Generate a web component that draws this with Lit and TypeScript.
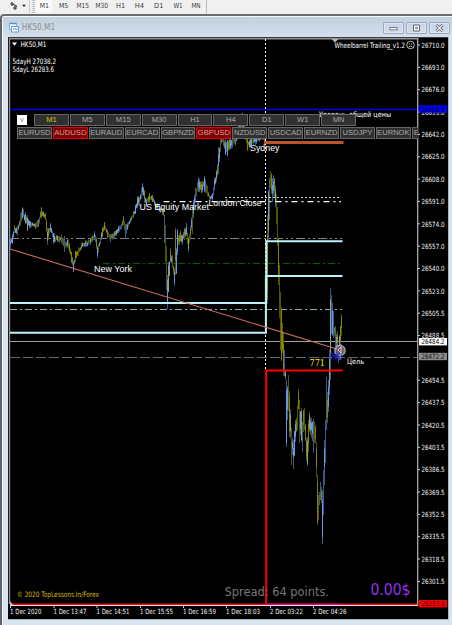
import { LitElement, html, svg, css } from "lit";
import { customElement } from "lit/decorators.js";
import { classMap } from "lit/directives/class-map.js";

const PERIODS = ["M1", "M5", "M15", "M30", "H1", "H4", "D1", "W1", "MN"];
const SYMBOLS = ["EURUSD", "AUDUSD", "EURAUD", "EURCAD", "GBPNZD", "GBPUSD", "NZDUSD", "USDCAD", "EURNZD", "USDJPY", "EURNOK"];
const HOT = new Set(["AUDUSD", "GBPUSD"]);
const PRICES = ["26710.0", "26693.0", "26676.0", "26659.0", "26642.0", "26625.0", "26608.0", "26591.0", "26574.0", "26557.0", "26540.0", "26523.0", "26505.5", "26488.5", "26471.5", "26454.5", "26437.5", "26420.5", "26403.5", "26386.5", "26369.5", "26352.5", "26335.5", "26318.5", "26301.5"];
const TIMES: [number, string, number][] = [
  [10, "1 Dec 2020", 31.5], [53.5, "1 Dec 13:47", 33], [96.5, "1 Dec 14:51", 33], [140, "1 Dec 15:55", 33],
  [183, "1 Dec 16:59", 33], [226, "1 Dec 18:03", 34], [270, "2 Dec 03:22", 33], [313, "2 Dec 04:26", 33.5],
];

// x, high, low of the price range
const RANGE: [number, number, number][] = [
  [10, 238, 249], [12, 234, 244], [14, 225, 233], [17, 226, 236], [20, 213, 226], [22, 207, 219], [25, 212, 224], [27, 215, 231], [30, 221, 228], [35, 223, 229], [38, 219, 227], [41, 207, 218], [45, 213, 220], [46, 219, 232], [47, 228, 245], [50, 223, 232], [53, 233, 244], [57, 235, 242], [61, 234, 243], [64, 236, 252], [68, 239, 249], [71, 252, 263], [73, 261, 272], [75, 251, 262], [78, 247, 256], [81, 243, 249], [85, 240, 247], [90, 238, 245], [94, 231, 240], [96, 237, 249], [97, 246, 258], [100, 237, 244], [102, 227, 237], [104, 222, 230], [107, 230, 238], [110, 234, 242], [114, 231, 239], [118, 226, 233], [121, 224, 229], [123, 216, 225], [125, 224, 239], [127, 223, 230], [130, 218, 223], [133, 211, 218], [135, 205, 214], [137, 196, 208], [139, 197, 206], [142, 183, 195], [144, 190, 203], [146, 198, 207], [149, 193, 203], [152, 195, 202], [155, 202, 209], [159, 204, 212], [163, 208, 216], [164, 215, 243], [165, 225, 262], [166, 246, 290], [167, 275, 309], [168, 262, 292], [170, 248, 262], [172, 255, 268], [174, 268, 286], [175, 228, 275], [176, 248, 274], [177, 229, 255], [180, 231, 242], [182, 234, 245], [184, 228, 240], [186, 223, 236], [188, 237, 252], [190, 226, 238], [192, 207, 234], [193, 200, 218], [195, 188, 202], [198, 177, 192], [201, 181, 193], [204, 176, 192], [207, 186, 196], [209, 195, 201], [212, 193, 202], [214, 178, 190], [216, 170, 182], [218, 147, 174], [220, 139, 152], [222, 132, 142], [225, 139, 155], [227, 140, 156], [229, 138, 150], [232, 137, 148], [235, 136, 146], [238, 125, 138], [242, 113, 128], [245, 130, 140], [247, 137, 151], [250, 137, 148], [255, 134, 146], [259, 136, 142], [263, 134, 140], [265, 134, 150],
];
const SESSION: [number, number, number][] = [
  [267, 215, 300], [268, 190, 240], [269, 178, 220], [270, 171, 188], [271, 173, 194], [272, 178, 202], [273, 175, 196], [274, 178, 197], [275, 186, 207], [276, 194, 224], [277, 207, 246], [278, 238, 285], [279, 265, 318], [280, 292, 350], [281, 307, 361], [282, 323, 353], [283, 333, 376], [284, 350, 376], [285, 370, 380], [286, 380, 447], [287, 386, 420], [288, 375, 411], [289, 391, 437], [290, 409, 438], [291, 428, 465], [292, 438, 455], [293, 440, 469], [294, 431, 456], [295, 420, 442], [297, 406, 430], [298, 389, 409], [299, 400, 443], [301, 408, 442], [302, 422, 452], [303, 410, 432], [304, 408, 430], [305, 424, 441], [306, 438, 461], [307, 437, 466], [308, 420, 452], [309, 412, 432], [311, 418, 438], [313, 419, 453], [314, 421, 443], [315, 425, 443], [316, 442, 477], [317, 475, 525], [318, 495, 520], [319, 492, 505], [320, 482, 500], [321, 487, 503], [322, 490, 544], [323, 470, 515], [324, 440, 485], [325, 420, 463], [326, 377, 430], [327, 392, 423], [328, 380, 412], [329, 350, 395], [330, 288, 380], [331, 295, 334], [332, 303, 336], [333, 311, 338], [335, 326, 349], [337, 331, 357], [338, 345, 363], [339, 335, 358], [340, 326, 346], [341, 314, 336], [342, 328, 353],
];

function noise(n: number) {
  const v = Math.sin(n * 127.1) * 43758.5453;
  return v - Math.floor(v);
}

function bars(points: [number, number, number][]) {
  const out = [];
  for (let i = 0; i < points.length - 1; i++) {
    const [x0, h0, l0] = points[i];
    const [x1, h1, l1] = points[i + 1];
    const span = x1 - x0;
    for (let k = 0; k < span; k++) {
      const t = k / span;
      const x = x0 + k;
      const h = h0 + (h1 - h0) * t;
      const l = l0 + (l1 - l0) * t;
      const len = l - h;
      const inner = span > 1 && k > 0;
      const hi = h + (inner ? len * 0.35 * noise(x) : 0);
      const lo = l - (inner ? len * 0.35 * noise(x + 400) : 0);
      const slope = (h1 + l1 - h0 - l0) / span;
      const blue = slope > 8 ? noise(x + 50) > 0.82 : slope < -8 ? noise(x + 50) > 0.22 : noise(x + 50) > 0.5;
      const a = hi + (lo - hi) * 0.3 * noise(x + 90);
      const b = lo - (lo - hi) * 0.4 * noise(x + 70);
      const tone = noise(x + 33);
      out.push(svg`<path class=${blue ? "up" : "down"} d="M${x + 0.5} ${hi}V${lo}"/>`);
      if (tone > 0.35) out.push(svg`<path class=${tone > 0.85 ? "mix" : blue ? "upcore" : "downcore"} d="M${x + 0.5} ${a}V${b}"/>`);
    }
  }
  return out;
}

@customElement("app-root")
export class AppRoot extends LitElement {
  static styles = css`
    :host { display: flex; flex-direction: column; width: 452px; height: 625px; overflow: hidden; background: #f0f0f0; font-family: "DejaVu Sans Condensed", "DejaVu Sans", sans-serif; }
    .toolbar { display: flex; height: 14px; flex: none; align-items: flex-start; background: #f0f0f0; }
    .tools { width: 35px; height: 14px; flex: none; }
    .periods { display: block; height: 14px; width: 172px; flex: none; }
    .window { flex: 1; display: flex; flex-direction: column; min-height: 0; border-top: 2px solid #686b6f; border-left: 2px solid #62666b; border-top-left-radius: 4px; background: #d7e4f2; box-shadow: inset 1px 1px #f4f9fe; }
    .title { height: 20px; flex: none; display: flex; align-items: center; padding: 0 2px 0 6px; background: linear-gradient(#c2d0df, #d3dfec); margin: 1px 0 0 1px; }
    .caption { flex: 1; height: 20px; display: block; }
    .controls { display: flex; gap: 2px; padding-top: 2px; }
    .ctl { width: 21px; height: 12px; box-sizing: border-box; border: 1px solid #9aa9bd; border-radius: 1px; box-shadow: inset 0 0 0 1px #dce7f2; }
    .ctl svg { display: block; width: 19px; height: 10px; }
    .pane { position: relative; width: 442px; height: 584px; margin: 0 0 0 6px; overflow: hidden; background: #000; flex: none; }
    .chart { display: block; width: 442px; height: 584px; }
    .panel { position: absolute; left: 9px; top: 77px; width: 401px; overflow: hidden; display: flex; flex-direction: column; }
    .row { display: flex; gap: 1px; height: 13px; }
    .btn { flex: none; box-sizing: border-box; width: 34.9px; height: 12px; border: 1px solid #666; background: #303030; color: #a8a8a8; font: 7.6px/10px "Liberation Sans", Arial, sans-serif; text-align: center; white-space: nowrap; overflow: hidden; }
    .btn.sel { color: #d9c900; }
    .btn.hot { background: #810000; border-color: #e00000; color: #d39b9b; }
    .btn.edge { width: 8px; border-right: 0; padding-left: 1px; text-align: left; }
    .fold { flex: none; width: 10px; height: 10px; margin: 1px 6px 0 0; background: #fff; color: #888; font: 7px/9px "Liberation Sans", Arial, sans-serif; text-align: center; }
    .up, .down, .upcore, .downcore, .mix { fill: none; stroke-width: 1; }
    .up { stroke: #38588f; }
    .upcore { stroke: #659bea; }
    .down { stroke: #525200; }
    .downcore { stroke: #858500; }
    .mix { stroke: #8da389; }
    .ui { font-size: 7.4px; fill: #fff; font-family: "DejaVu Sans Condensed", "DejaVu Sans", sans-serif; }
    .axis { font-size: 7.1px; fill: #f2f2f2; }
    .tf { font-size: 7px; fill: #3a3a3a; }
    .arial { font: 9px "Liberation Sans", Arial, sans-serif; fill: #fff; }
    .profit { font: 16px "DejaVu Sans Condensed", sans-serif; fill: #9431ea; }
    .spread { font: 13px "DejaVu Sans Condensed", sans-serif; fill: #777; }
    .count { font: 10px "DejaVu Serif", "Liberation Serif", serif; fill: #f2f200; }
  `;

  private chart() {
    const label = (x: number, y: number, w: number, s: string, cls = "ui") =>
      svg`<text class=${cls} x=${x} y=${y} textLength=${w} lengthAdjust="spacingAndGlyphs">${s}</text>`;
    return html`
      <svg class="chart" viewBox="8 37 442 584">
        <rect x="8" y="37" width="442" height="584" fill="#d7e4f2"/>
        <rect x="8" y="37" width="441" height="583" fill="#e8edf2"/>
        <rect x="7" y="36.5" width="441.5" height="583" fill="#777"/>
        <rect x="8" y="37.5" width="440" height="581.5" fill="#000"/>
        <path d="M9.5 604V38.7H418" stroke="#919191" fill="none" stroke-width="1.4"/>
        <path d="M10 238.5H342" stroke="#858585" stroke-dasharray="9 3 2 3 2 3"/>
        <path d="M103 263.5H342" stroke="#006000" stroke-dasharray="7 3 2 3"/>
        <path d="M10 309.5H342" stroke="#8caeb8" stroke-dasharray="7 3 2 3"/>
        <path d="M10 341.5H418" stroke="#a0a0a0"/>
        <path d="M10 357.5H418" stroke="#666" stroke-dasharray="10 3"/>
        <path d="M265.5 39V371" stroke="#fff" stroke-dasharray="2 2"/>
        ${bars(RANGE)}${bars(SESSION)}
        <path d="M10 109.5H418" stroke="#0000f5" stroke-width="1.3"/>
        <path d="M264 142.5H343.5" stroke="#b95330" stroke-width="3"/>
        <path d="M225 197.5H341" stroke="#b8e0e4" stroke-dasharray="2 2"/>
        <path d="M163.5 201.7H341" stroke="#fff" stroke-width="1.2" stroke-dasharray="6 4 2 4"/>
        <path d="M10 302.9H266.3V241.3H342.5M10 332.8H265.9V275.9H342.5" fill="none" stroke="#bff2f8" stroke-width="2"/>
        <path d="M10 249L340 350" stroke="#cc6d61" stroke-width="1.1"/>
        <path d="M266.2 604V370.6H342.7" stroke="#f00" stroke-width="2" fill="none"/>
        <circle cx="340" cy="350.5" r="5.2" fill="#666" stroke="#aaa" stroke-width="1.2"/>
        <path d="M331 353L342 359M341 352L331 359M336 350V361M331 356H343" stroke="#1818d0" stroke-width="1"/>
        <path d="M337 345L335 354M341 344L340 360" stroke="#72a5e8" stroke-width="1"/>
        <path d="M338 350l3-3v6z" fill="#f02020" stroke="#eee" stroke-width=".7"/>

        <path d="M12 42.5h5l-2.5 3.2z" fill="#fff"/>
        ${label(20.5, 47.3, 26, "HK50,M1")}
        ${label(12.5, 64, 43.5, "5dayH 27038.2")}
        ${label(12.5, 72.3, 41.5, "5dayL 26283.6")}
        <path d="M331.5 39h7l-3.5 3.5z" fill="#b5b5b5"/>
        ${label(334.5, 47.6, 70.5, "Wheelbarrel Trailing_v1.2")}
        <circle cx="410.5" cy="45" r="3.8" fill="none" stroke="#ddd" stroke-width=".8"/>
        <circle cx="409.3" cy="44" r=".6" fill="#eee"/><circle cx="411.7" cy="44" r=".6" fill="#eee"/>
        <path d="M408.5 47q2-2 4 0" stroke="#eee" stroke-width=".7" fill="none"/>
        ${label(319, 116.5, 72, "Уровень общей цены")}
        ${label(250, 151.3, 29.5, "Sydney", "arial")}
        ${label(139.5, 209.8, 69.5, "US Equity Market", "arial")}
        ${label(208.5, 206.3, 53, "London Close", "arial")}
        ${label(94, 272, 38, "New York", "arial")}
        ${label(309.5, 366.3, 15.5, "771", "count")}
        ${label(347, 364, 17, "Цель")}
        <text class="ui" x="17" y="597" textLength="82" lengthAdjust="spacingAndGlyphs" style="fill:#d9bd00">© 2020 TopLessons.In/Forex</text>
        ${label(224.5, 596, 104.5, "Spread: 64 points.", "spread")}
        ${label(370.5, 595, 40, "0.00$", "profit")}

        <path d="M10 604.3H418" stroke="#f00" stroke-width="1.5"/>
        <path d="M10 605.5H418" stroke="#eee" stroke-width="1"/>
        <path d="M265 604.3H342" stroke="#e000b0" stroke-width="1"/>
        <path d="M10 601l3 4h-3z" fill="#bbb"/>
        <path d="M417.7 38V606" stroke="#aaa" stroke-width="1.3"/>
        ${PRICES.map((p, i) => {
          const y = 45 + i * 22.35;
          return i === 14 ? "" : svg`<path d=${`M418 ${y}h2`} stroke="#ccc"/>
            <text class="ui axis" x="421.5" y=${y + 2.7} textLength="23" lengthAdjust="spacingAndGlyphs">${p}</text>`;
        })}
        ${([[109, "#0000f5", "26660.9", "#000050"], [341.7, "#fff", "26484.2", "#000"], [356.5, "#8a8a8a", "26472.2", "#111"], [603.7, "#f00", "26283.6", "#500000"]] as [number, string, string, string][]).map(
          ([y, bg, text, fg]) => svg`<rect x="419" y=${y - 3.7} width="28" height="7.4" fill=${bg}/>
            <text class="ui axis" x="421.5" y=${y + 2.7} style="fill:${fg}" textLength="23" lengthAdjust="spacingAndGlyphs">${text}</text>`)}
        ${TIMES.map(([x, text, w]) => svg`<path d=${`M${x + 0.5} 605v3`} stroke="#ccc"/>
          <text class="ui axis" x=${x} y="614.2" textLength=${w} lengthAdjust="spacingAndGlyphs">${text}</text>`)}
      </svg>`;
  }

  render() {
    const centres = [44.3, 63.5, 82.7, 101.8, 120.7, 139.3, 158.7, 178, 196];
    return html`
      <div class="toolbar">
        <svg class="tools" viewBox="0 0 35 14">
          <path d="M10 4h4M12 2v4M12 3.5l5 3" stroke="#444" stroke-width="1.2"/>
          <path d="M13 8h4M15 6v4" stroke="#333" stroke-width="1.1"/>
          <path d="M22 4.8h4l-2 2.3z" fill="#222"/>
          <path d="M29.5 0v13" stroke="#ccc"/>
          <path d="M33.5 0v13" stroke="#aaa" stroke-width="2" stroke-dasharray="1 1"/>
        </svg>
        <svg class="periods" viewBox="35 0 172 14">
          <rect x="36" y="0" width="16" height="12.5" fill="#f9f9f9"/>
          <path d="M206.5 0v13.5" stroke="#bbb"/>
          ${PERIODS.map((p, i) => svg`<text class="tf" x=${centres[i]} y="8.3" text-anchor="middle" textLength=${p.length === 3 ? 12.5 : 9.2} lengthAdjust="spacingAndGlyphs">${p}</text>`)}
        </svg>
      </div>
      <div class="window">
        <div class="title">
          <svg width="10" height="11" viewBox="0 0 10 11">
            <path d="M.5 1.5h7v6h-7z" fill="#fff" stroke="#7cb1e2"/><path d="M.5 1.5h7" stroke="#4f93d5" stroke-width="1.6"/>
            <path d="M2.5 4.5h7v5.5h-7z" fill="#fff" stroke="#5a9ee0"/><path d="M4 8l1.5-2L7 8l1.5-2" stroke="#4088d0" fill="none" stroke-width=".8"/>
          </svg>
          <svg class="caption" viewBox="19 18 360 20" preserveAspectRatio="xMinYMin slice">
            <text x="21.8" y="31" textLength="33" lengthAdjust="spacingAndGlyphs" font-size="8.8" fill="#8e8e8e">HK50,M1</text>
          </svg>
          <div class="controls">
            <div class="ctl"><svg viewBox="0 0 19 10"><rect x="6" y="4.5" width="7" height="2.4" fill="#fff" stroke="#5c6570" stroke-width=".8"/></svg></div>
            <div class="ctl"><svg viewBox="0 0 19 10"><path d="M6.5 2h6v6h-6z" fill="#fff" stroke="#5c6570"/><path d="M8.7 4.2h1.7v1.7H8.7z" fill="none" stroke="#5c6570" stroke-width=".8"/></svg></div>
            <div class="ctl"><svg viewBox="0 0 19 10"><path d="M6.5 2l6 6M12.5 2l-6 6" stroke="#5c6570" stroke-width="2.6"/><path d="M6.7 2.2l5.6 5.6M12.3 2.2L6.7 7.8" stroke="#fff" stroke-width="1.1"/></svg></div>
          </div>
        </div>
        <div class="pane">
          ${this.chart()}
          <div class="panel">
            <div class="row"><span class="fold">v</span>${PERIODS.map((p) => html`<span class=${classMap({ btn: true, sel: p === "M1" })}>${p}</span>`)}</div>
            <div class="row">${SYMBOLS.map((s) => html`<span class=${classMap({ btn: true, hot: HOT.has(s) })}>${s}</span>`)}<span class="btn edge">E</span></div>
          </div>
        </div>
      </div>`;
  }
}
